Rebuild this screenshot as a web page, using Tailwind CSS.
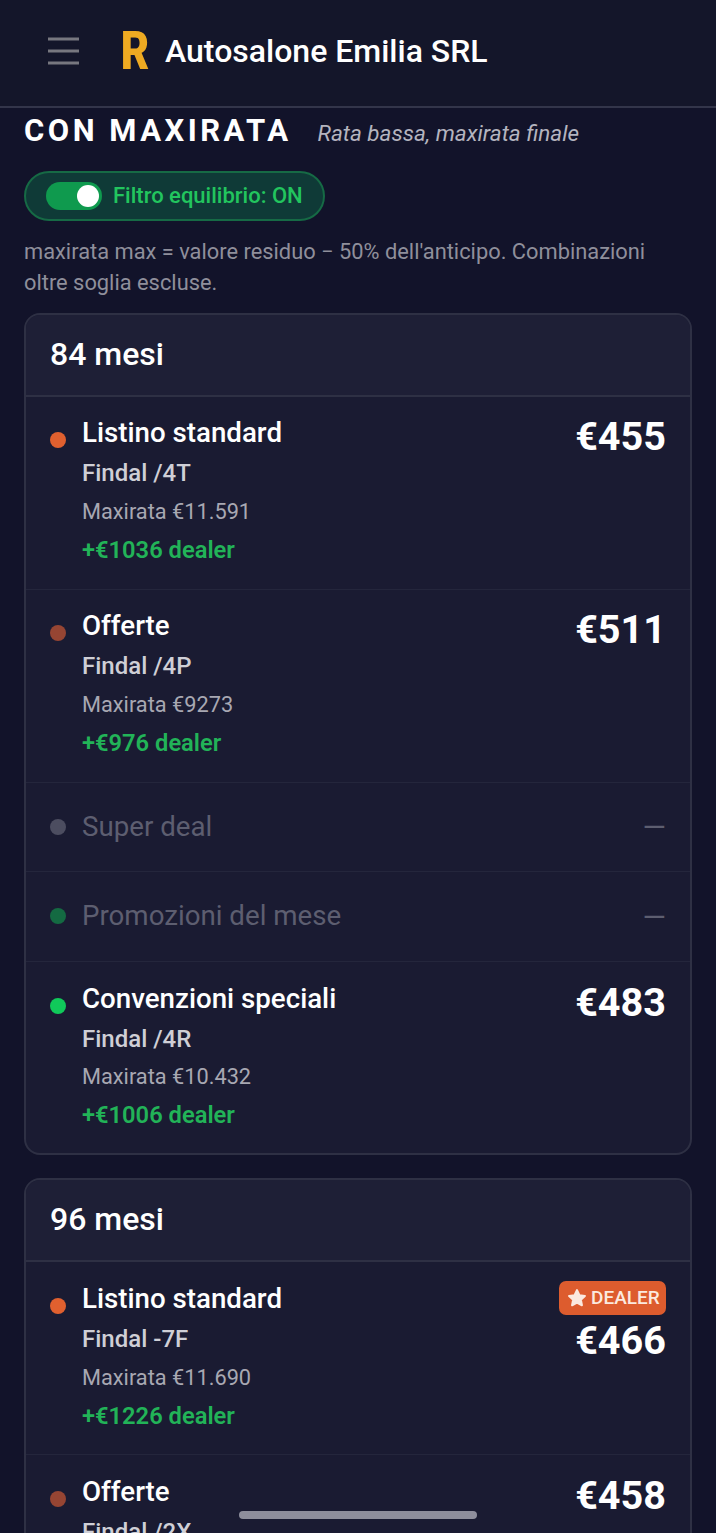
<!DOCTYPE html>
<html lang="en">
  <head>
    <meta charset="UTF-8" />
    <meta name="viewport" content="width=device-width, initial-scale=1.0" />
    <title>Autosalone Emilia SRL</title>
    <script src="https://cdn.jsdelivr.net/npm/@tailwindcss/browser@4"></script>
  </head>
  <body class="bg-[#12132a] font-['Roboto',sans-serif] antialiased">
    <div class="relative w-[716px] h-[1533px] overflow-hidden">
      <!-- header -->
      <header class="h-[108px] flex items-center pl-[48px] pb-[4px] bg-[#14162a] border-b-2 border-[#33354a]">
        <svg width="31" height="28" viewBox="0 0 31 28" class="text-[#77777f]">
          <path d="M0 2h31M0 14h31M0 26h31" stroke="currentColor" stroke-width="3" />
        </svg>
        <span class="ml-[41px] w-[28px] text-[#eeaa22] text-[53px] leading-none font-bold font-['Roboto_Condensed','Roboto',sans-serif]">R</span>
        <span class="ml-[17px] text-white text-[32px] font-medium leading-none">Autosalone Emilia SRL</span>
      </header>

      <main class="px-[24px]">
        <div class="flex items-baseline gap-[26px] mt-[5px]">
          <h2 class="text-white text-[31px] font-bold tracking-[3.5px] leading-[36px]">CON MAXIRATA</h2>
          <span class="text-[#b4b4bf] text-[22.5px] italic leading-[36px]">Rata bassa, maxirata finale</span>
        </div>

        <div class="mt-[20px] w-[301px] h-[50px] rounded-full bg-[#0f3a37] border-2 border-[#166a45] flex items-center pl-[20px]">
          <span class="relative w-[56px] h-[28px] rounded-full bg-[#0f9a4e]">
            <span class="absolute right-[3px] top-[3px] w-[22px] h-[22px] rounded-full bg-white"></span>
          </span>
          <span class="ml-[11px] text-[#22c55e] text-[22px] font-medium leading-none">Filtro equilibrio: ON</span>
        </div>

        <p class="mt-[15px] text-[#8f8f9b] text-[21.85px] leading-[31px]">maxirata max = valore residuo − 50% dell'anticipo. Combinazioni oltre soglia escluse.</p>

        <!-- 84 mesi -->
        <section class="mt-[15px] rounded-[16px] border-2 border-[#2e3044] bg-[#1a1b32] overflow-hidden">
          <h3 class="h-[82px] pl-[24px] pb-[2px] flex items-center text-white text-[32px] font-medium bg-[#1e1f36] border-b-2 border-[#2e3044]">84 mesi</h3>

          <div class="h-[193px] flex justify-between pl-[24px] pr-[24px] pt-[20px] border-b border-[#24263c]">
            <div class="flex">
              <span class="w-[16px] h-[16px] mt-[15px] rounded-full bg-[#e0602f]"></span>
              <div class="ml-[16px]">
                <div class="text-white text-[27.7px] font-medium leading-[32px]">Listino standard</div>
                <div class="mt-[10px] text-[#cfcfd6] text-[24px] leading-[28px] font-medium">Findal /4T</div>
                <div class="mt-[11px] text-[#a8a8b2] text-[21.75px] leading-[28px]">Maxirata €11.591</div>
                <div class="mt-[10px] text-[#22b358] text-[23.7px] font-semibold leading-[28px]">+€1036 dealer</div>
              </div>
            </div>
            <div class="text-white text-[39.6px] font-bold leading-[40px]">€455</div>
          </div>

          <div class="h-[193px] flex justify-between pl-[24px] pr-[24px] pt-[20px] border-b border-[#24263c]">
            <div class="flex">
              <span class="w-[16px] h-[16px] mt-[15px] rounded-full bg-[#964533]"></span>
              <div class="ml-[16px]">
                <div class="text-white text-[27.7px] font-medium leading-[32px]">Offerte</div>
                <div class="mt-[10px] text-[#cfcfd6] text-[24px] leading-[28px] font-medium">Findal /4P</div>
                <div class="mt-[11px] text-[#a8a8b2] text-[21.75px] leading-[28px]">Maxirata €9273</div>
                <div class="mt-[10px] text-[#22b358] text-[23.7px] font-semibold leading-[28px]">+€976 dealer</div>
              </div>
            </div>
            <div class="text-white text-[39.6px] font-bold leading-[40px]">€511</div>
          </div>

          <div class="h-[89px] flex items-center justify-between pl-[24px] pr-[24px] pb-[1px] border-b border-[#24263c]">
            <div class="flex items-center">
              <span class="w-[16px] h-[16px] rounded-full bg-[#4c4d60]"></span>
              <span class="ml-[16px] text-[#5d5e70] text-[27.7px] leading-[32px]">Super deal</span>
            </div>
            <span class="text-[#5d5e70] text-[30px]">—</span>
          </div>

          <div class="h-[90px] flex items-center justify-between pl-[24px] pr-[24px] pb-[1px] border-b border-[#24263c]">
            <div class="flex items-center">
              <span class="w-[16px] h-[16px] rounded-full bg-[#146a42]"></span>
              <span class="ml-[16px] text-[#5d5e70] text-[27.7px] leading-[32px]">Promozioni del mese</span>
            </div>
            <span class="text-[#5d5e70] text-[30px]">—</span>
          </div>

          <div class="h-[191px] flex justify-between pl-[24px] pr-[24px] pt-[21px]">
            <div class="flex">
              <span class="w-[16px] h-[16px] mt-[15px] rounded-full bg-[#10c95a]"></span>
              <div class="ml-[16px]">
                <div class="text-white text-[27.7px] font-medium leading-[32px]">Convenzioni speciali</div>
                <div class="mt-[10px] text-[#cfcfd6] text-[24px] leading-[28px] font-medium">Findal /4R</div>
                <div class="mt-[10px] text-[#a8a8b2] text-[21.75px] leading-[28px]">Maxirata €10.432</div>
                <div class="mt-[10px] text-[#22b358] text-[23.7px] font-semibold leading-[28px]">+€1006 dealer</div>
              </div>
            </div>
            <div class="text-white text-[39.6px] font-bold leading-[40px]">€483</div>
          </div>
        </section>

        <!-- 96 mesi -->
        <section class="mt-[23px] rounded-t-[16px] border-2 border-[#2e3044] bg-[#1a1b32]">
          <h3 class="h-[82px] pl-[24px] pb-[2px] flex items-center text-white text-[32px] font-medium bg-[#1e1f36] rounded-t-[14px] border-b-2 border-[#2e3044]">96 mesi</h3>

          <div class="h-[193px] flex justify-between pl-[24px] pr-[24px] pt-[21px] border-b border-[#24263c]">
            <div class="flex">
              <span class="w-[16px] h-[16px] mt-[15px] rounded-full bg-[#e0602f]"></span>
              <div class="ml-[16px]">
                <div class="text-white text-[27.7px] font-medium leading-[32px]">Listino standard</div>
                <div class="mt-[10px] text-[#cfcfd6] text-[24px] leading-[28px] font-medium">Findal -7F</div>
                <div class="mt-[11px] text-[#a8a8b2] text-[21.75px] leading-[28px]">Maxirata €11.690</div>
                <div class="mt-[10px] text-[#22b358] text-[23.7px] font-semibold leading-[28px]">+€1226 dealer</div>
              </div>
            </div>
            <div class="flex flex-col items-end -mt-[2px]">
              <span class="h-[34px] w-[107px] pl-[8px] rounded-[7px] bg-[#dd5c2e] flex items-center gap-[4px] text-[#fbe9df] text-[19px] font-medium">
                <svg width="20" height="20" viewBox="0 0 24 24" fill="currentColor" stroke="currentColor" stroke-width="2.5" stroke-linejoin="round">
                  <path d="M12 2.5l2.9 6.2 6.6.8-4.9 4.6 1.3 6.6L12 17.4l-5.9 3.3 1.3-6.6-4.9-4.6 6.6-.8z" />
                </svg>
                DEALER
              </span>
              <div class="mt-[6px] text-white text-[39.6px] font-bold leading-[40px]">€466</div>
            </div>
          </div>

          <div class="flex justify-between pl-[24px] pr-[24px] pt-[21px]">
            <div class="flex">
              <span class="w-[16px] h-[16px] mt-[15px] rounded-full bg-[#964533]"></span>
              <div class="ml-[16px]">
                <div class="text-white text-[27.7px] font-medium leading-[32px]">Offerte</div>
                <div class="mt-[10px] text-[#cfcfd6] text-[24px] leading-[28px] font-medium">Findal /2X</div>
              </div>
            </div>
            <div class="text-white text-[39.6px] font-bold leading-[40px]">€458</div>
          </div>
        </section>
      </main>

      <!-- home indicator -->
      <div class="absolute left-[239px] top-[1511px] w-[238px] h-[8px] rounded-full bg-[#8e8e9c]"></div>
    </div>
  </body>
</html>
